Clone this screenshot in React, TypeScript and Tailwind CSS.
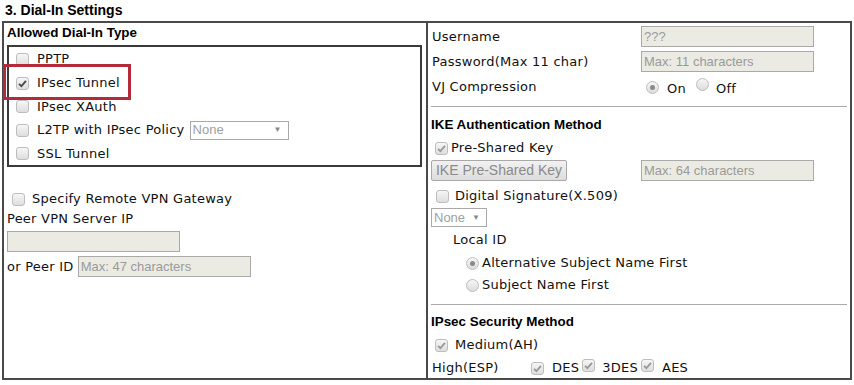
import React from "react";

const Box = ({ checked = false, dark = false }: { checked?: boolean; dark?: boolean }) => (
  <span className="relative inline-block w-[13px] h-[13px] shrink-0 rounded-[3px] border border-[#bdbdbd] bg-gradient-to-b from-[#f6f6f6] to-[#dedede]">
    {checked && (
      <svg viewBox="0 0 13 13" className="absolute -left-px -top-px w-[13px] h-[13px]">
        <path d="M3 6.8 L5.4 9.2 L10 3.8" fill="none" stroke={dark ? "#4a4a4a" : "#9a9a9a"} strokeWidth="1.8" />
      </svg>
    )}
  </span>
);

const Radio = ({ checked = false }: { checked?: boolean }) => (
  <span className="relative inline-flex items-center justify-center w-[13px] h-[13px] shrink-0 rounded-full border border-[#bdbdbd] bg-gradient-to-b from-[#f6f6f6] to-[#dcdcdc]">
    {checked && <span className="w-[5px] h-[5px] rounded-full bg-[#8a8a8a]" />}
  </span>
);

const Field = ({ text = "" }: { text?: string }) => (
  <div className="w-[173px] h-[21px] shrink-0 border border-[#a9a9a9] bg-[#ebebe4] px-[2px] flex items-center font-['Liberation_Sans',sans-serif] text-[13px] tracking-normal text-[#9a9a9a]">
    {text}
  </div>
);

const Select = ({ w }: { w: string }) => (
  <div className={`${w} h-[19px] shrink-0 border border-[#a9a9a9] bg-white flex items-center justify-between pl-[2px] pr-[6px] font-['Liberation_Sans',sans-serif] text-[13px] tracking-normal text-[#a0a0a0]`}>
    <span>None</span>
    <span className="text-[8px] text-[#888]">▼</span>
  </div>
);

const Bold = ({ children, cls = "" }: { children: React.ReactNode; cls?: string }) => (
  <div className={`h-[16px] flex items-center font-['Liberation_Sans',sans-serif] font-bold text-[13.4px] tracking-normal text-black ${cls}`}>{children}</div>
);

export default function App() {
  const dialTypes = ["PPTP", "IPsec Tunnel", "IPsec XAuth", "L2TP with IPsec Policy", "SSL Tunnel"];
  return (
    <div className="relative w-[854px] h-[385px] bg-white text-[13px] tracking-[0.25px] text-[#111] font-['DejaVu_Sans',Verdana,sans-serif] overflow-hidden">
      <div className="h-[21px] pl-[5px] flex items-center font-['Liberation_Sans',sans-serif] font-bold text-[14px] tracking-normal text-black">
        3. Dial-In Settings
      </div>
      <div className="ml-[2px] w-[850px] h-[359px] flex border-2 border-[#4a4a4a]">
        {/* left column */}
        <div className="w-[424px] shrink-0 border-r-2 border-[#4a4a4a] pl-[3px] pt-[2px]">
          <Bold>Allowed Dial-In Type</Bold>
          <div className="mt-[4px] w-[415px] h-[122px] border-2 border-[#3a3a3a]">
            {dialTypes.map((t, i) => (
              <div key={t} className={`${i === 2 || i === 4 ? "h-[23px]" : "h-[24px]"} flex items-center pl-[7px]`}>
                <Box checked={i === 1} dark />
                <span className="ml-[8px]">{t}</span>
                {i === 3 && (
                  <div className="ml-[5px]">
                    <Select w="w-[99px]" />
                  </div>
                )}
              </div>
            ))}
          </div>
          <div className="mt-[22px] h-[20px] flex items-center pl-[5px]">
            <Box />
            <span className="ml-[7px]">Specify Remote VPN Gateway</span>
          </div>
          <div className="h-[20px] flex items-center">Peer VPN Server IP</div>
          <div className="mt-[2px]">
            <Field />
          </div>
          <div className="mt-[4px] flex items-center gap-[4px]">
            <span>or Peer ID</span>
            <Field text="Max: 47 characters" />
          </div>
        </div>
        {/* right column */}
        <div className="flex-1 pl-[3px] pr-[3px] pt-[3px]">
          <div className="h-[21px] flex items-center">
            <span className="w-[210px] pl-px">Username</span>
            <Field text="???" />
          </div>
          <div className="mt-[4px] h-[21px] flex items-center">
            <span className="w-[210px] pl-px">Password(Max 11 char)</span>
            <Field text="Max: 11 characters" />
          </div>
          <div className="mt-[3px] h-[24px] flex items-center">
            <span className="w-[215px] pl-px">VJ Compression</span>
            <Radio checked />
            <span className="ml-[8px] mt-[3px]">On</span>
            <span className="ml-[10px]"><Radio /></span>
            <span className="ml-[7px] mt-[3px]">Off</span>
          </div>
          <div className="mt-[7px] border-t border-[#aaaaaa]" />
          <Bold cls="mt-[10px]">IKE Authentication Method</Bold>
          <div className="mt-[5px] h-[20px] flex items-center pl-[4px]">
            <Box checked />
            <span className="ml-[3px]">Pre-Shared Key</span>
          </div>
          <div className="mt-[2px] flex items-center">
            <div className="w-[136px] h-[21px] border border-[#a9a9a9] rounded-[2px] bg-gradient-to-b from-[#f2f2f2] to-[#dddddd] flex items-center justify-center font-['Liberation_Sans',sans-serif] text-[14px] tracking-normal text-[#8a8a8a]">
              IKE Pre-Shared Key
            </div>
            <div className="ml-[74px]">
              <Field text="Max: 64 characters" />
            </div>
          </div>
          <div className="mt-[5px] h-[20px] flex items-center pl-[5px]">
            <Box />
            <span className="ml-[6px]">Digital Signature(X.509)</span>
          </div>
          <div className="mt-[2px]">
            <Select w="w-[56px]" />
          </div>
          <div className="mt-[3px] h-[20px] flex items-center pl-[22px]">Local ID</div>
          <div className="mt-[2px] h-[22px] flex items-center pl-[35px]">
            <Radio checked />
            <span className="ml-[3px]">Alternative Subject Name First</span>
          </div>
          <div className="h-[22px] flex items-center pl-[35px]">
            <Radio />
            <span className="ml-[3px]">Subject Name First</span>
          </div>
          <div className="mt-[8px] border-t border-[#aaaaaa]" />
          <Bold cls="mt-[9px]">IPsec Security Method</Bold>
          <div className="mt-[4px] h-[22px] flex items-center pl-[4px]">
            <Box checked />
            <span className="ml-[7px]">Medium(AH)</span>
          </div>
          <div className="mt-[1px] h-[22px] flex items-center">
            <span className="w-[100px] pl-px">High(ESP)</span>
            <Box checked />
            <span className="ml-[8px]">DES</span>
            <span className="ml-[3px]"><Box checked /></span>
            <span className="ml-[7px]">3DES</span>
            <span className="ml-[3px]"><Box checked /></span>
            <span className="ml-[8px]">AES</span>
          </div>
        </div>
      </div>
      {/* highlight annotation */}
      <div className="absolute left-[3px] top-[64px] w-[128px] h-[36px] border-[3px] border-[#b32b3a]" />
    </div>
  );
}
